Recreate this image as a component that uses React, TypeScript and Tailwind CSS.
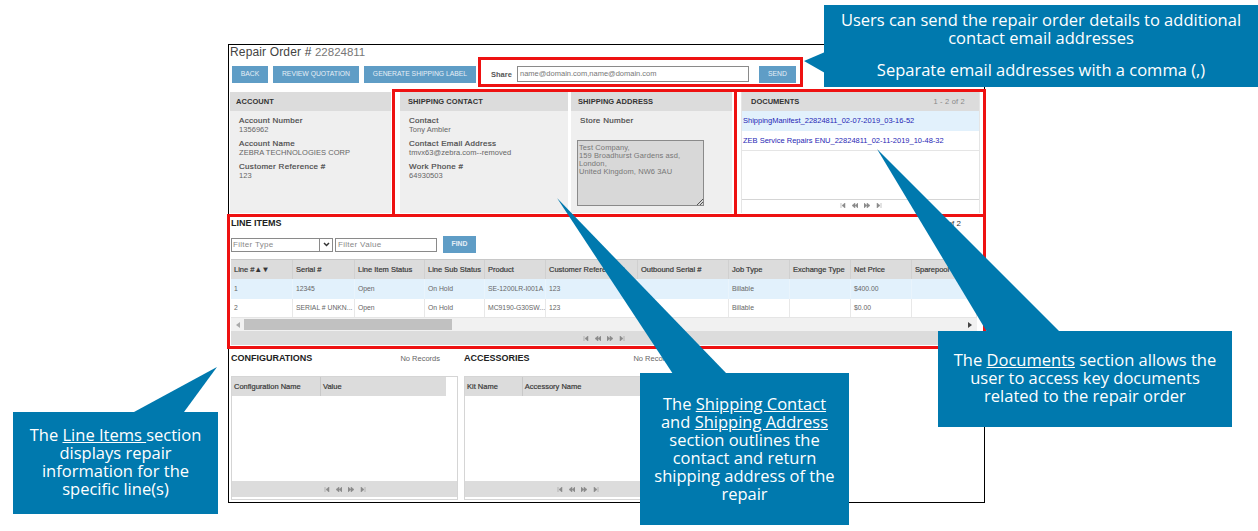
import React from "react";

const Pager = () => (
  <div className="flex items-center gap-[6px]">
    {["M1 0v5M5 0L2 2.5 5 5z", "M3 0L0 2.5 3 5zM6 0L3 2.5 6 5z", "M0 0l3 2.5L0 5zM3 0l3 2.5L3 5z", "M1 0l3 2.5L1 5zM5 0v5"].map((d) => (
      <svg key={d} width="6" height="5" viewBox="0 0 6 5" className="fill-[#8a8a8a] stroke-[#8a8a8a] stroke-[0.5]">
        <path d={d} />
      </svg>
    ))}
  </div>
);

const Btn = ({ children, className = "" }: { children: React.ReactNode; className?: string }) => (
  <div className={`h-[17px] bg-[#5f9dc6] text-[#e6eff6] text-[6.8px] flex items-center justify-center ${className}`}>{children}</div>
);

const PanelHeader = ({ children, pl = "pl-[6px]" }: { children: React.ReactNode; pl?: string }) => (
  <div className={`h-[19px] shrink-0 bg-[#dcdcdc] flex items-center text-[7.5px] font-bold tracking-[0.05px] text-[#333] ${pl}`}>{children}</div>
);

const Field = ({ label, value }: { label: string; value?: string }) => (
  <div className="mb-[5px] leading-[9px]">
    <div className="text-[#444] text-[8px] tracking-[0.3px] [-webkit-text-stroke:0.2px_#555]">{label}</div>
    {value && <div className="text-[#666] text-[7.5px] tracking-[0.05px]">{value}</div>}
  </div>
);

const cols: [string, number, string, string][] = [
  ["Line #▲▼", 62, "1", "2"],
  ["Serial #", 62, "12345", "SERIAL # UNKN..."],
  ["Line Item Status", 70, "Open", "Open"],
  ["Line Sub Status", 60, "On Hold", "On Hold"],
  ["Product", 61, "SE-1200LR-I001A", "MC9190-G30SW..."],
  ["Customer Reference #", 92, "123", "123"],
  ["Outbound Serial #", 91, "", ""],
  ["Job Type", 61, "Billable", "Billable"],
  ["Exchange Type", 61, "", ""],
  ["Net Price", 61, "$400.00", "$0.00"],
  ["Sparepool Part", 65, "", ""],
];

const SmallTable = ({ a, b, aw, bw }: { a: string; b: string; aw: string; bw: string }) => (
  <div className="w-[227px] h-[124px] border border-[#d5d5d5] flex flex-col">
    <div className="h-[19px] shrink-0 flex text-[7.5px] text-[#333] [-webkit-text-stroke:0.2px_#444]">
      <div className={`${aw} bg-[#dcdcdc] border-r border-[#c8c8c8] pl-[2px] flex items-center`}>{a}</div>
      <div className={`${bw} bg-[#dcdcdc] pl-[2px] flex items-center`}>{b}</div>
    </div>
    <div className="flex-1" />
    <div className="h-[16px] mb-[2px] bg-[#dcdcdc] flex items-center justify-center">
      <Pager />
    </div>
  </div>
);

const Callout = ({ className, children }: { className: string; children: React.ReactNode }) => (
  <div className={`absolute bg-[#0079ae] text-white text-center font-['Open_Sans',sans-serif] flex flex-col justify-center ${className}`}>
    {children}
  </div>
);

export default function App() {
  return (
    <div className="relative w-[1258px] h-[531px] bg-white overflow-hidden font-['Liberation_Sans',sans-serif]">
      <div className="ml-[228px] pt-[44px]">
        <div className="w-[757px] h-[459px] border border-black flex flex-col">
          {/* Title */}
          <div className="h-[14px] pl-[1px] text-[12px] leading-[14px] text-[#444] tracking-[0.15px]">
            Repair Order # <span className="text-[11.5px] tracking-normal text-[#777]">22824811</span>
          </div>
          {/* Toolbar */}
          <div className="mt-[7px] h-[17px] flex pl-[3px]">
            <Btn className="w-[36px]">BACK</Btn>
            <Btn className="w-[86px] ml-[5px]">REVIEW QUOTATION</Btn>
            <Btn className="w-[112px] ml-[5px]">GENERATE SHIPPING LABEL</Btn>
            <div className="ml-[15px] text-[7.5px] font-bold text-[#555] flex items-center w-[24px]">Share</div>
            <div className="w-[232px] h-[16px] ml-[2px] border border-[#8a8a8a] text-[7.5px] text-[#777] pl-[2px] flex items-center">name@domain.com,name@domain.com</div>
            <Btn className="w-[37px] ml-[10px]">SEND</Btn>
          </div>
          {/* Panels */}
          <div className="mt-[9px] h-[121px] flex pl-[1px]">
            <div className="w-[161px] flex flex-col bg-[#efefef]">
              <PanelHeader>ACCOUNT</PanelHeader>
              <div className="pt-[5px] pl-[9px]">
                <Field label="Account Number" value="1356962" />
                <Field label="Account Name" value="ZEBRA TECHNOLOGIES CORP" />
                <Field label="Customer Reference #" value="123" />
              </div>
            </div>
            <div className="w-[168px] ml-[9px] flex flex-col bg-[#efefef]">
              <PanelHeader pl="pl-[8px]">SHIPPING CONTACT</PanelHeader>
              <div className="pt-[5px] pl-[9px]">
                <Field label="Contact" value="Tony Ambler" />
                <Field label="Contact Email Address" value="tmvx63@zebra.com--removed" />
                <Field label="Work Phone #" value="64930503" />
              </div>
            </div>
            <div className="w-[161px] ml-[3px] flex flex-col bg-[#efefef]">
              <PanelHeader pl="pl-[7px]">SHIPPING ADDRESS</PanelHeader>
              <div className="pt-[5px] pl-[9px]">
                <Field label="Store Number" />
              </div>
              <div className="relative mt-[10px] ml-[6px] w-[127px] h-[66px] bg-[#d8d8d8] border border-[#8a8a8a] text-[7.5px] leading-[8px] tracking-[0.1px] text-[#777] pl-[1px] pt-[3px]">
                Test Company,
                <br />
                159 Broadhurst Gardens asd,
                <br />
                London,
                <br />
                United Kingdom, NW6 3AU
                <svg width="6" height="6" viewBox="0 0 6 6" className="absolute right-0 bottom-0 stroke-[#555]">
                  <path d="M0 6L6 0M3 6L6 3" />
                </svg>
              </div>
            </div>
            <div className="w-[239px] ml-[9px] flex flex-col border-x border-[#e5e5e5]">
              <div className="h-[19px] shrink-0 bg-[#dcdcdc] pl-[9px] pr-[14px] flex items-center justify-between text-[7.5px]">
                <span className="font-bold text-[#333]">DOCUMENTS</span>
                <span className="text-[#888] tracking-[0.2px]">1 - 2 of 2</span>
              </div>
              <div className="h-[20px] bg-[#e2f1fc] pl-[1px] flex items-center text-[7.5px] text-[#1f1fb5]">ShippingManifest_22824811_02-07-2019_03-16-52</div>
              <div className="h-[20px] border-b border-[#e5e5e5] pl-[1px] flex items-center text-[7.5px] text-[#1f1fb5]">ZEB Service Repairs ENU_22824811_02-11-2019_10-48-32</div>
              <div className="flex-1" />
              <div className="h-[14px] pb-[2px] border-t border-[#d5d5d5] flex items-center justify-center">
                <Pager />
              </div>
            </div>
          </div>
          {/* Line items */}
          <div className="mt-[5px] pl-[2px] h-[127px] flex flex-col">
            <div className="h-[12px] flex justify-between items-center pr-[23px]">
              <span className="text-[9px] font-bold text-[#222]">LINE ITEMS</span>
              <span className="text-[8px] text-[#333]">1 - 2 of 2</span>
            </div>
            <div className="mt-[6px] h-[17px] flex items-center">
              <div className="w-[102px] h-[14px] border border-[#8a8a8a] flex items-center text-[8px] text-[#888] pl-[1px] tracking-[0.3px]">
                <span className="flex-1">Filter Type</span>
                <span className="w-[13px] h-full border-l border-[#8a8a8a] flex items-center justify-center">
                  <svg width="7" height="5" viewBox="0 0 7 5" className="fill-none stroke-[#333] stroke-[1.5]">
                    <path d="M1 1l2.5 2.5L6 1" />
                  </svg>
                </span>
              </div>
              <div className="w-[102px] h-[14px] ml-[2px] border border-[#8a8a8a] flex items-center text-[8px] text-[#888] pl-[2px] tracking-[0.3px]">Filter Value</div>
              <Btn className="w-[33px] ml-[6px] font-bold">FIND</Btn>
            </div>
            <div className="mt-[6px] w-[746px] flex h-[20px] border-t border-[#c8c8c8] bg-[#dcdcdc]">
              {cols.map(([h, w]) => (
                <div key={h} style={{ width: w }} className="shrink-0 overflow-hidden whitespace-nowrap pl-[3px] flex items-center text-[7.5px] text-[#333] [-webkit-text-stroke:0.2px_#444] border-r border-[#d0d0d0]">
                  {h}
                </div>
              ))}
            </div>
            <div className="w-[746px] flex h-[20px] bg-[#e2f1fc] text-[6.8px] text-[#666]">
              {cols.map(([h, w, a]) => (
                <div key={h} style={{ width: w }} className="shrink-0 whitespace-nowrap overflow-hidden pl-[3px] flex items-center border-r border-[#e9f4fc]">
                  {a}
                </div>
              ))}
            </div>
            <div className="w-[746px] flex h-[19px] border-b border-[#e5e5e5] text-[6.8px] text-[#666]">
              {cols.map(([h, w, , b]) => (
                <div key={h} style={{ width: w }} className="shrink-0 whitespace-nowrap overflow-hidden pl-[3px] flex items-center border-r border-[#e8e8e8]">
                  {b}
                </div>
              ))}
            </div>
            <div className="w-[746px] h-[13px] bg-[#f1f1f1] flex items-center">
              <svg width="4" height="6" viewBox="0 0 4 6" className="ml-[5px] fill-[#aaa]">
                <path d="M4 0L0 3l4 3z" />
              </svg>
              <div className="ml-[4px] w-[208px] h-[11px] bg-[#c1c1c1]" />
              <div className="flex-1" />
              <svg width="4" height="6" viewBox="0 0 4 6" className="mr-[5px] fill-[#444]">
                <path d="M0 0l4 3-4 3z" />
              </svg>
            </div>
            <div className="w-[746px] h-[14px] bg-[#dcdcdc] flex items-center justify-center">
              <Pager />
            </div>
          </div>
          {/* Bottom tables */}
          <div className="mt-[6px] pl-[2px] flex gap-[6px]">
            <div className="w-[227px]">
              <div className="h-[15px] flex items-center justify-between pr-[18px]">
                <span className="text-[9px] font-bold text-[#222]">CONFIGURATIONS</span>
                <span className="text-[7.5px] text-[#666]">No Records</span>
              </div>
              <div className="mt-[10px]">
                <SmallTable a="Configuration Name" b="Value" aw="w-[89px]" bw="w-[125px]" />
              </div>
            </div>
            <div className="w-[227px]">
              <div className="h-[15px] flex items-center justify-between pr-[18px]">
                <span className="text-[9px] font-bold text-[#222]">ACCESSORIES</span>
                <span className="text-[7.5px] text-[#666]">No Records</span>
              </div>
              <div className="mt-[10px]">
                <SmallTable a="Kit Name" b="Accessory Name" aw="w-[58px]" bw="w-[168px]" />
              </div>
            </div>
          </div>
        </div>
      </div>

      {/* Red highlight frames */}
      <div className="absolute left-[478px] top-[57px] w-[325px] h-[30px] border-[3px] border-[#ee1111]" />
      <div className="absolute left-[392px] top-[89px] w-[345px] h-[128px] border-[3px] border-[#ee1111]" />
      <div className="absolute left-[734px] top-[89px] w-[252px] h-[128px] border-[3px] border-[#ee1111]" />
      <div className="absolute left-[227px] top-[214px] w-[759px] h-[135px] border-[3px] border-[#ee1111]" />

      {/* Callout pointers */}
      <svg width="1258" height="531" className="absolute left-0 top-0 pointer-events-none fill-[#0079ae]">
        <path d="M804 61L825 52V73z" />
        <path d="M217 367L134 412H184z" />
        <path d="M557 198L673 374H727z" />
        <path d="M877 149L987 332H1060z" />
      </svg>

      {/* Callouts */}
      <Callout className="left-[824px] top-[5px] w-[434px] h-[82px] text-[16.5px] leading-[18px] pb-[1px]">
        <div>Users can send the repair order details to additional</div>
        <div>contact email addresses</div>
        <div className="mt-[13px] leading-[20px]">Separate email addresses with a comma (,)</div>
      </Callout>
      <Callout className="left-[13px] top-[412px] w-[205px] h-[102px] text-[16.5px] leading-[18px] pb-[2px]">
        <div>
          The <span className="underline">Line Items </span>section
        </div>
        <div>displays repair</div>
        <div>information for the</div>
        <div>specific line(s)</div>
      </Callout>
      <Callout className="left-[640px] top-[373px] w-[209px] h-[152px] text-[16.5px] leading-[18px] pb-[1px]">
        <div>
          The <span className="underline">Shipping Contact</span>
        </div>
        <div>
          and <span className="underline">Shipping Address</span>
        </div>
        <div>section outlines the</div>
        <div>contact and return</div>
        <div>shipping address of the</div>
        <div>repair</div>
      </Callout>
      <Callout className="left-[938px] top-[331px] w-[294px] h-[96px] text-[16.5px] leading-[18px] pb-[3px]">
        <div>
          The <span className="underline">Documents</span> section allows the
        </div>
        <div>user to access key documents</div>
        <div>related to the repair order</div>
      </Callout>
    </div>
  );
}
